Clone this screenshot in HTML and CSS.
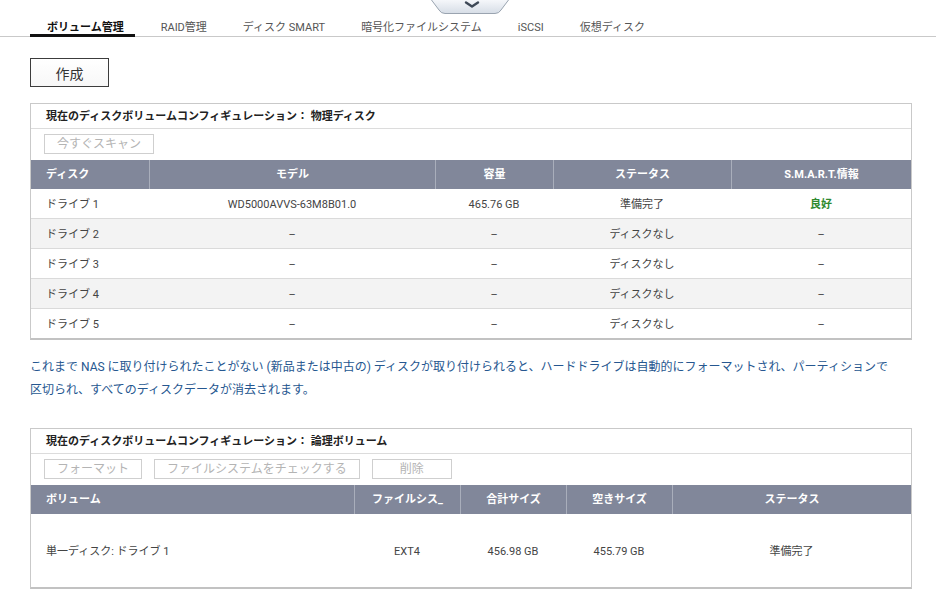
FILE: index.html
```html
<!DOCTYPE html>
<html lang="ja">
<head>
<meta charset="utf-8">
<title>ボリューム管理</title>
<link rel="stylesheet" href="styles.css">
</head>
<body>
<header class="topbar">
  <div class="handle">
    <svg width="78" height="14" viewBox="0 0 78 14">
      <defs>
        <linearGradient id="hg" x1="0" y1="0" x2="0" y2="1">
          <stop offset="0" stop-color="#f5f7fa"/>
          <stop offset="1" stop-color="#d6dde6"/>
        </linearGradient>
      </defs>
      <path d="M0.5 0 L8 10 Q10 13.5 14 13.5 L64 13.5 Q68 13.5 70 10 L77.5 0" fill="url(#hg)" stroke="#9aa4b0"/>
      <path d="M35 2.5 L41 6.5 L47 2.5" fill="none" stroke="#3e4957" stroke-width="2.4" stroke-linecap="round" stroke-linejoin="round"/>
    </svg>
  </div>
  <nav class="tabs">
    <div class="tab active">ボリューム管理</div>
    <div class="tab">RAID管理</div>
    <div class="tab">ディスク SMART</div>
    <div class="tab">暗号化ファイルシステム</div>
    <div class="tab">iSCSI</div>
    <div class="tab">仮想ディスク</div>
  </nav>
</header>

<main class="content">
  <button class="create">作成</button>

  <section class="panel">
    <div class="panel-title">現在のディスクボリュームコンフィギュレーション： 物理ディスク</div>
    <div class="toolbar">
      <span class="btn">今すぐスキャン</span>
    </div>
    <div class="table disks">
      <div class="th left">ディスク</div>
      <div class="th">モデル</div>
      <div class="th">容量</div>
      <div class="th">ステータス</div>
      <div class="th">S.M.A.R.T.情報</div>

      <div class="td left">ドライブ 1</div>
      <div class="td">WD5000AVVS-63M8B01.0</div>
      <div class="td">465.76 GB</div>
      <div class="td">準備完了</div>
      <div class="td good">良好</div>

      <div class="td left alt">ドライブ 2</div>
      <div class="td alt">–</div>
      <div class="td alt">–</div>
      <div class="td alt">ディスクなし</div>
      <div class="td alt">–</div>

      <div class="td left">ドライブ 3</div>
      <div class="td">–</div>
      <div class="td">–</div>
      <div class="td">ディスクなし</div>
      <div class="td">–</div>

      <div class="td left alt">ドライブ 4</div>
      <div class="td alt">–</div>
      <div class="td alt">–</div>
      <div class="td alt">ディスクなし</div>
      <div class="td alt">–</div>

      <div class="td left last">ドライブ 5</div>
      <div class="td last">–</div>
      <div class="td last">–</div>
      <div class="td last">ディスクなし</div>
      <div class="td last">–</div>
    </div>
  </section>

  <p class="note">これまで NAS に取り付けられたことがない (新品または中古の) ディスクが取り付けられると、ハードドライブは自動的にフォーマットされ、パーティションで<br>区切られ、すべてのディスクデータが消去されます。</p>

  <section class="panel">
    <div class="panel-title">現在のディスクボリュームコンフィギュレーション： 論理ボリューム</div>
    <div class="toolbar">
      <span class="btn">フォーマット</span>
      <span class="btn">ファイルシステムをチェックする</span>
      <span class="btn wide">削除</span>
    </div>
    <div class="table volumes">
      <div class="th left">ボリューム</div>
      <div class="th">ファイルシス_</div>
      <div class="th">合計サイズ</div>
      <div class="th">空きサイズ</div>
      <div class="th">ステータス</div>

      <div class="td left tall">単一ディスク: ドライブ 1</div>
      <div class="td tall">EXT4</div>
      <div class="td tall">456.98 GB</div>
      <div class="td tall">455.79 GB</div>
      <div class="td tall">準備完了</div>
    </div>
  </section>
</main>
</body>
</html>
```

FILE: styles.css
```css
* { box-sizing: border-box; }

body {
  margin: 0;
  background: #ffffff;
  font-family: Roboto, "Noto Sans CJK JP", sans-serif;
  font-size: 11px;
  color: #444;
}

.topbar {
  position: relative;
  height: 37px;
  border-bottom: 1px solid #c9c9c9;
}

.handle {
  position: absolute;
  left: 431px;
  top: 0;
  line-height: 0;
}

.tabs {
  display: flex;
  padding-left: 29px;
  height: 100%;
}

.tab {
  position: relative;
  padding: 20px 18px 0;
  line-height: 15px;
  font-size: 11px;
  color: #555;
  white-space: nowrap;
}

.tab:nth-child(2) { padding-left: 19px; }

.tab.active {
  color: #111;
  font-weight: bold;
}

.tab.active::after {
  content: "";
  position: absolute;
  left: 1px;
  right: 7px;
  bottom: -1px;
  height: 3px;
  background: #111;
}

.content {
  padding: 21px 24px 0 30px;
}

.create {
  display: block;
  width: 79px;
  height: 29px;
  padding: 0;
  border: 1px solid #3c3c3c;
  background: linear-gradient(#ffffff, #f7f7f7);
  font-family: Roboto, "Noto Sans CJK JP", sans-serif;
  font-size: 14px;
  color: #333;
}

.panel {
  width: 882px;
  margin-top: 16px;
  border: 1px solid #c9c9c9;
  border-bottom: 2px solid #c2c2c2;
}

.panel-title {
  height: 25px;
  line-height: 25px;
  padding-left: 15px;
  font-weight: bold;
  color: #222;
  border-bottom: 1px solid #dcdcdc;
}

.toolbar {
  display: flex;
  gap: 12px;
  height: 31px;
  padding: 5px 0 0 13px;
}

.btn {
  display: inline-block;
  height: 20px;
  line-height: 18px;
  padding: 0 12px;
  border: 1px solid #cfcfcf;
  background: #fff;
  color: #b4b4b4;
  font-size: 12px;
  text-align: center;
  white-space: nowrap;
}

.btn.wide { min-width: 80px; }

.table { display: grid; }

.disks { grid-template-columns: 118px 286px 118px 178px 180px; }

.volumes { grid-template-columns: 323px 106px 106px 106px 239px; }

.th {
  height: 29px;
  line-height: 29px;
  background: #81879a;
  color: #fff;
  font-weight: bold;
  text-align: center;
  border-left: 1px solid #a9aebb;
  white-space: nowrap;
}

.th.left {
  text-align: left;
  padding-left: 15px;
  border-left: none;
}

.td {
  height: 30px;
  line-height: 31px;
  text-align: center;
  border-bottom: 1px solid #dadada;
  color: #444;
  white-space: nowrap;
}

.td.left {
  text-align: left;
  padding-left: 15px;
}

.td.alt { background: #f3f3f3; }

.td.last {
  border-bottom: none;
  height: 29px;
}

.td.good {
  color: #2f8a2f;
  font-weight: bold;
}

.td.tall {
  height: 73px;
  line-height: 76px;
  border-bottom: none;
}

.note {
  margin: 16px 0 26px;
  line-height: 23px;
  font-size: 12px;
  color: #265790;
}
```
